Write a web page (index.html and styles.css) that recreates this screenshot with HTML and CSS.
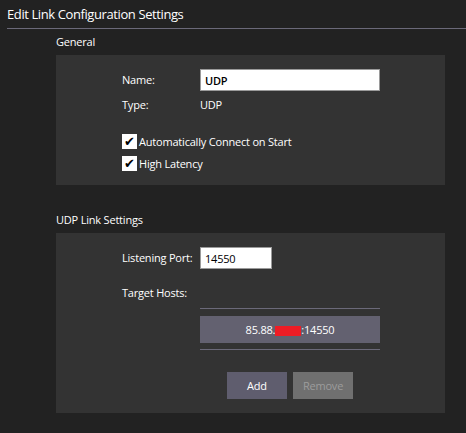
FILE: index.html
```html
<!DOCTYPE html>
<html lang="en">
<head>
    <meta charset="UTF-8">
    <title>Edit Link Configuration Settings</title>
    <link rel="stylesheet" href="styles.css">
</head>
<body>
    <div class="page-title">Edit Link Configuration Settings</div>

    <div class="section-title">General</div>
    <div class="panel">
        <div class="form-grid">
            <span class="label">Name:</span>
            <input class="text-input name-input" type="text" value="UDP">
            <span class="label">Type:</span>
            <span class="value">UDP</span>
        </div>
        <div class="checks">
            <label class="check"><span class="box">&#10004;</span>Automatically Connect on Start</label>
            <label class="check"><span class="box">&#10004;</span>High Latency</label>
        </div>
    </div>

    <div class="section-title">UDP Link Settings</div>
    <div class="panel">
        <div class="form-grid">
            <span class="label">Listening Port:</span>
            <input class="text-input port-input" type="text" value="14550">
        </div>
        <div class="label hosts-label">Target Hosts:</div>
        <div class="hosts">
            <div class="host-row">85.88.<span class="redact"></span>:14550</div>
        </div>
        <div class="buttons">
            <button class="btn btn-add">Add</button>
            <button class="btn btn-remove">Remove</button>
        </div>
    </div>
</body>
</html>
```

FILE: styles.css
```css
body {
    margin: 0;
    background-color: #222222;
    color: #ffffff;
    font-family: "Open Sans", "Noto Sans", sans-serif;
    font-size: 11px;
    letter-spacing: -0.2px;
}

.page-title {
    margin-left: 7px;
    height: 28px;
    line-height: 28px;
    font-size: 13px;
    letter-spacing: -0.4px;
    border-bottom: 1px solid #6b6979;
}

.section-title {
    margin-left: 56px;
    height: 26px;
    line-height: 26px;
}

.panel {
    margin: 0 21px 22px 56px;
    background-color: #333333;
    padding: 14px 0 14px 66px;
}

.form-grid {
    display: grid;
    grid-template-columns: 78px auto;
    row-gap: 3px;
    align-items: center;
    justify-content: start;
}

.label,
.value {
    height: 22px;
    line-height: 22px;
    white-space: nowrap;
}

.text-input {
    box-sizing: border-box;
    height: 22px;
    border: 1px solid #9a9a9a;
    background: #ffffff;
    color: #000000;
    font-family: inherit;
    font-size: 11px;
    letter-spacing: -0.2px;
    padding: 0 4px;
    outline: none;
}

.name-input {
    width: 180px;
    font-weight: 600;
}

.port-input {
    width: 72px;
}

.checks {
    margin-top: 18px;
    display: flex;
    flex-direction: column;
    gap: 7px;
}

.check {
    display: flex;
    align-items: center;
    height: 15px;
}

.box {
    width: 15px;
    height: 15px;
    margin-right: 2px;
    background: #ffffff;
    color: #000000;
    font-size: 13px;
    line-height: 15px;
    text-align: center;
}

.hosts-label {
    margin-top: 13px;
}

.hosts {
    width: 180px;
    margin: 4px 0 0 78px;
    padding: 7px 0 6px;
    border-top: 1px solid #6b6979;
    border-bottom: 1px solid #6b6979;
}

.host-row {
    height: 27px;
    line-height: 27px;
    background-color: #636170;
    text-align: center;
}

.redact {
    display: inline-block;
    width: 26px;
    height: 10px;
    margin-bottom: -2px;
    background-color: #ee1c25;
}

.buttons {
    display: flex;
    gap: 6px;
    margin: 22px 0 0 105px;
}

.btn {
    width: 60px;
    height: 27px;
    border: none;
    font-family: inherit;
    font-size: 11px;
    letter-spacing: -0.2px;
    padding: 0;
}

.btn-add {
    background-color: #5f5d6e;
    color: #ffffff;
}

.btn-remove {
    background-color: #707070;
    color: #9c9c9c;
}
```
